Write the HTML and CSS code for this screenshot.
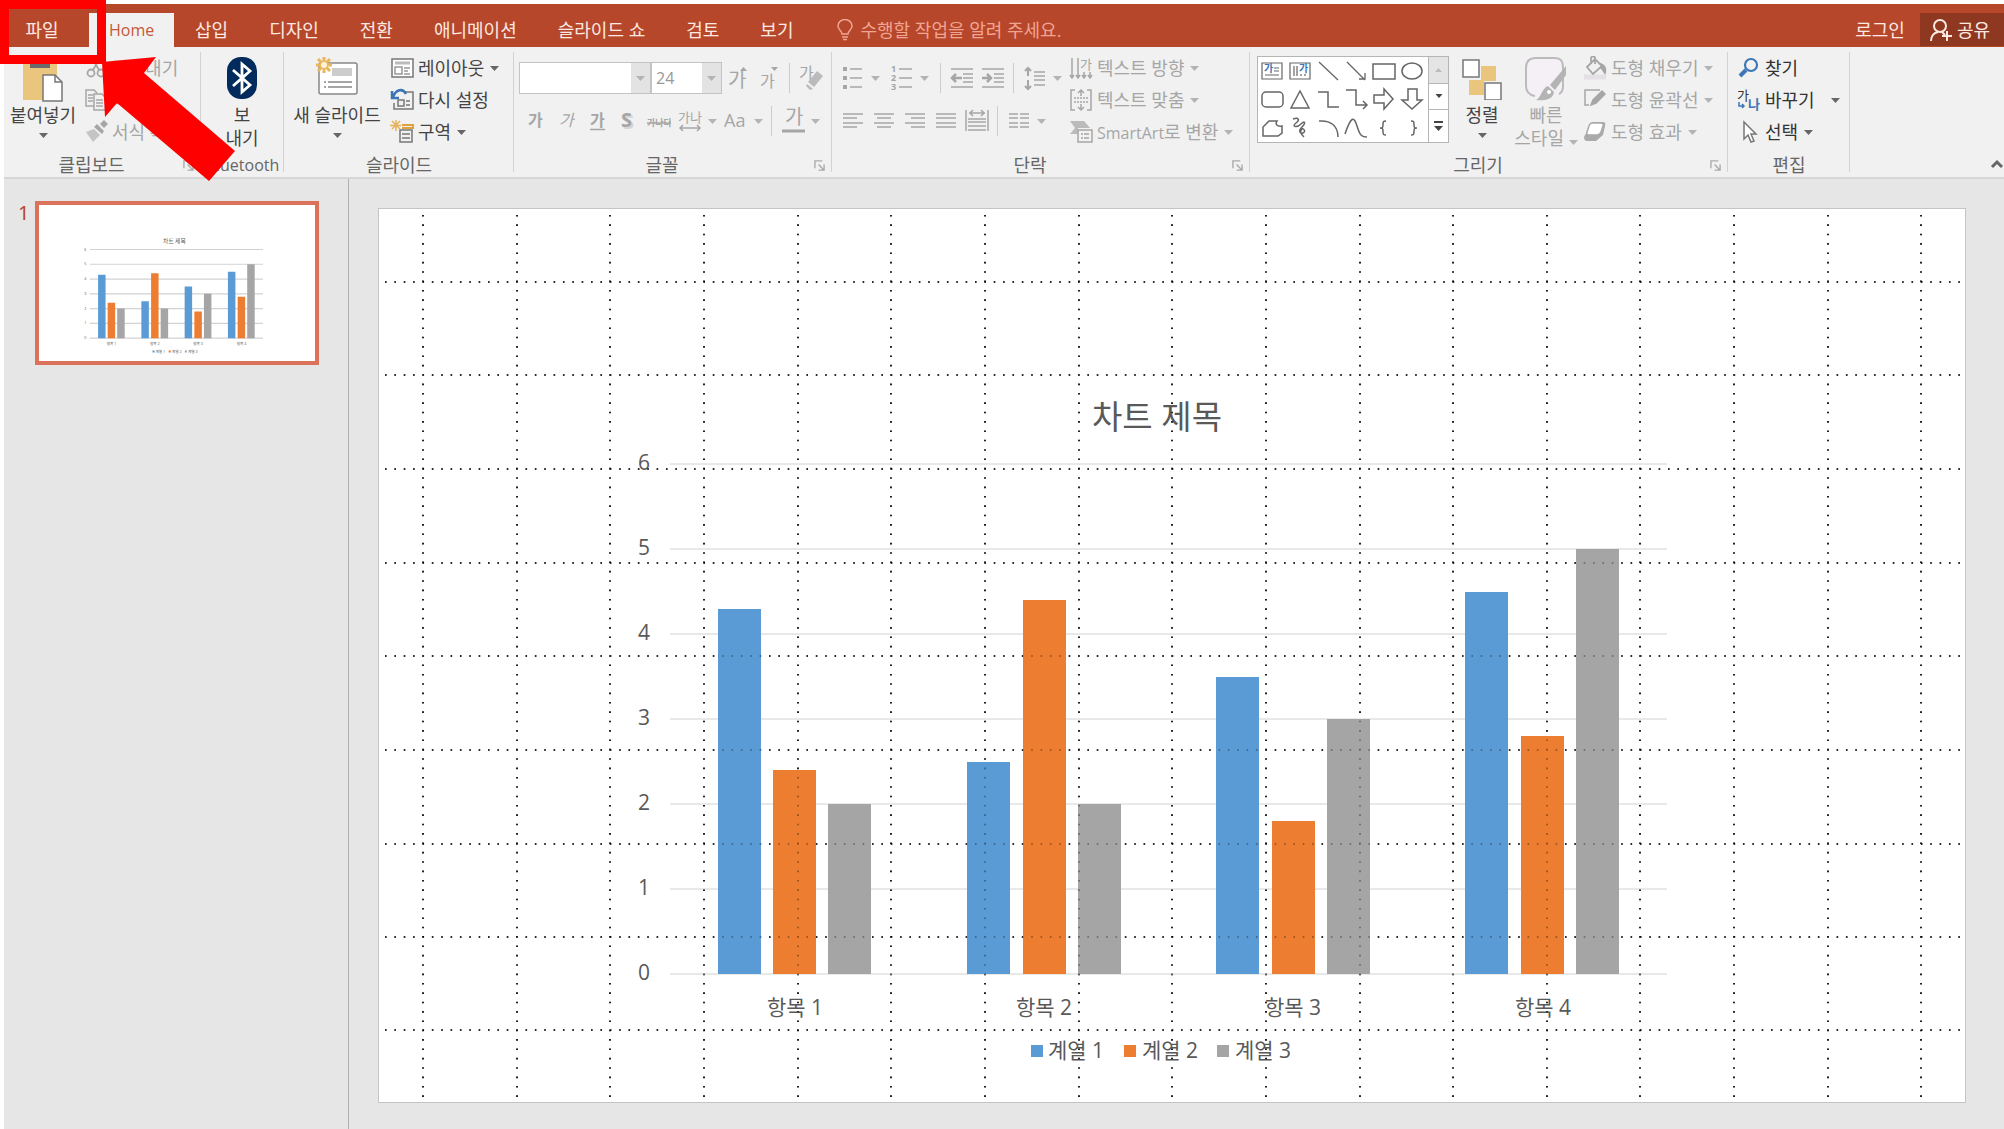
FILE: index.html
```html
<!DOCTYPE html>
<html lang="ko">
<head>
<meta charset="utf-8">
<title>프레젠테이션</title>
<link rel="stylesheet" href="styles.css">
</head>
<body>
<svg class="defs" width="0" height="0" aria-hidden="true">
  <symbol id="arrow" viewBox="0 0 9 5"><path d="M0 0h9L4.500 5z" fill="currentColor"/></symbol>
  <symbol id="launcher" viewBox="0 0 12 12"><path d="M1 9V1h8M5 5l5 5M11 5v6H5" fill="none" stroke="currentColor" stroke-width="1.500"/></symbol>
  <symbol id="dots" viewBox="0 0 1588 895">
    <path fill="none" stroke="#000" stroke-width="1.600" stroke-dasharray="1.600 7.765" d="M45 7V890M139 7V890M232 7V890M326 7V890M420 7V890M513 7V890M607 7V890M701 7V890M794 7V890M888 7V890M982 7V890M1075 7V890M1169 7V890M1262 7V890M1356 7V890M1450 7V890M1543 7V890M7 74H1583M7 167H1583M7 261H1583M7 355H1583M7 448H1583M7 542H1583M7 636H1583M7 729H1583M7 822H1583"/>
  </symbol>
</svg>

<div class="app">
  <header class="tabs">
    <nav class="tab-list" aria-label="리본 탭">
      <button class="tab file">파일</button>
      <button class="tab active latin">Home</button>
      <button class="tab">삽입</button>
      <button class="tab">디자인</button>
      <button class="tab">전환</button>
      <button class="tab">애니메이션</button>
      <button class="tab">슬라이드 쇼</button>
      <button class="tab">검토</button>
      <button class="tab">보기</button>
    </nav>
    <button class="tell">
      <svg width="16" height="22" viewBox="0 0 16 22" fill="none" stroke="currentColor" stroke-width="1.500"><path d="M5 15c0-3-4-4-4-8a7 6.500 0 0 1 14 0c0 4-4 5-4 8zM5 18h6M6 20.500h4"/></svg>
      수행할 작업을 알려 주세요.
    </button>
    <div class="account">
      <button class="login">로그인</button>
      <button class="share">
        <svg width="22" height="24" viewBox="0 0 22 24" fill="none" stroke="currentColor" stroke-width="2"><circle cx="10" cy="8" r="6"/><path d="M1 23c0-5 3-8 7-9M12 14l3 3M17 13v10M12 18h10"/></svg>
        공유
      </button>
    </div>
  </header>

  <div class="ribbon">
    <section class="group clipboard">
      <div class="content">
        <button class="big paste">
          <svg width="40" height="46" viewBox="0 0 40 46"><path fill="#eac57d" d="M0 4h34v40H0z"/><path fill="#6a6a6a" d="M7 4h20v8H7zM12 0h10v6H12z"/><path fill="#fff" stroke="#777" stroke-width="1.500" d="M20 19h12l7 7v19H20z"/><path fill="none" stroke="#777" stroke-width="1.500" d="M32 19v7h7"/></svg>
          <span>붙여넣기</span>
          <svg class="arrow"><use href="#arrow"/></svg>
        </button>
        <div class="stack dim">
          <button class="item"><svg width="24" height="24" viewBox="0 0 24 24" fill="none" stroke="currentColor" stroke-width="1.800"><circle cx="7" cy="17" r="3.500"/><circle cx="17" cy="17" r="3.500"/><path d="M9 14l7-12M15 14L8 2"/></svg>잘라내기</button>
          <button class="item"><svg width="24" height="24" viewBox="0 0 24 24" fill="none" stroke="currentColor" stroke-width="1.500"><path d="M10 18H2V2h8l3 3M4 7h5M4 10h5M4 13h5M10 6h8l4 4v12H10zM12 12h7M12 15h7M12 18h7"/></svg>복사</button>
          <button class="item"><svg width="24" height="24" viewBox="0 0 24 24" fill="currentColor"><path d="M2 12l8-3 6 6-7 7z" opacity=".6"/><path d="M10 7l8 7 2-3-7-7zM16 4l4-4 4 4-4 4z"/></svg>서식 복사</button>
        </div>
      </div>
      <footer><span>클립보드</span><button class="launch" aria-label="클립보드 옵션"><svg><use href="#launcher"/></svg></button></footer>
    </section>

    <section class="group bluetooth">
      <div class="content">
        <button class="big">
          <svg width="32" height="44" viewBox="0 0 32 44"><rect x="1" y="1" width="30" height="42" rx="14" fill="#002b5c"/><path fill="none" stroke="#fff" stroke-width="2.800" d="M7 14l17 15-8 7V8l8 7L7 30"/></svg>
          <span>보<br>내기</span>
        </button>
      </div>
      <footer><span class="latin">Bluetooth</span></footer>
    </section>

    <section class="group slides">
      <div class="content">
        <button class="big new-slide">
          <svg width="44" height="42" viewBox="0 0 44 42"><rect x="4" y="7" width="38" height="31" rx="2" fill="#fff" stroke="#888" stroke-width="1.500"/><path fill="#ccc" d="M17 12h20v8H17z"/><path stroke="#888" stroke-width="1.500" stroke-dasharray="2 2 24 2" d="M9 26h28M9 31h28"/><path stroke="#eab65b" stroke-width="3" d="M9 1v16M1 9h16M3 3l12 12M15 3L3 15"/><circle cx="9" cy="9" r="3" fill="#fff3d8"/></svg>
          <span>새 슬라이드</span>
          <svg class="arrow"><use href="#arrow"/></svg>
        </button>
        <div class="stack">
          <button class="item"><svg width="24" height="24" viewBox="0 0 24 24" fill="none" stroke="#777" stroke-width="1.500"><path fill="#fff" d="M2 3h21v18H2z"/><path stroke="#bbb" stroke-width="3" d="M5 7h15"/><path d="M5 11h7v7H5zM14 12h6M14 15h4M14 18h6" stroke="#999"/></svg>레이아웃<svg class="arrow"><use href="#arrow"/></svg></button>
          <button class="item"><svg width="24" height="24" viewBox="0 0 24 24" fill="none" stroke="#777" stroke-width="1.500"><path d="M14 4h9v17H4v-6M8 12h6v6H8zM16 13h4M16 17h4"/><path stroke="#3d76b5" stroke-width="2.500" d="M2 3v7h7M3 9c3-8 10-9 13-3"/></svg>다시 설정</button>
          <button class="item"><svg width="24" height="24" viewBox="0 0 24 24" fill="none" stroke="#777" stroke-width="1.500"><path d="M10 10h12v12H10zM12 14h8M12 18h8"/><path stroke="#e2a13f" stroke-width="2" d="M12 5h11v3H12"/><path stroke="#e8b25a" d="M6 0v11M0 5.500h11M2 1l8 8M10 1L2 9"/></svg>구역<svg class="arrow"><use href="#arrow"/></svg></button>
        </div>
      </div>
      <footer><span>슬라이드</span></footer>
    </section>

    <section class="group font">
      <div class="content dim">
        <div class="tools">
          <div class="row">
            <span class="combo family"><select aria-label="글꼴"><option></option></select><svg class="arrow"><use href="#arrow"/></svg></span>
            <span class="combo size"><select aria-label="글꼴 크기"><option>24</option></select><svg class="arrow"><use href="#arrow"/></svg></span>
            <button class="tool" aria-label="글꼴 크게"><svg width="24" height="28" viewBox="0 0 24 28"><text class="glyph big-glyph" x="2" y="23">가</text><path fill="currentColor" d="M14 7h7l-3.500-4z"/></svg></button>
            <button class="tool" aria-label="글꼴 작게"><svg width="24" height="28" viewBox="0 0 24 28"><text class="glyph" x="3" y="23">가</text><path fill="currentColor" d="M14 3h7l-3.500 4z"/></svg></button>
            <i class="sep"></i>
            <button class="tool" aria-label="서식 지우기"><svg width="24" height="28" viewBox="0 0 24 28"><text class="glyph" x="0" y="15">가</text><path fill="#bbb" d="M9 18l9-11 6 5-9 11zM8 20l6 5-3 1-4-4z"/></svg></button>
          </div>
          <div class="row">
            <button class="tool" aria-label="굵게"><svg width="24" height="28" viewBox="0 0 24 28"><text class="glyph bold" x="5" y="19">가</text></svg></button>
            <button class="tool" aria-label="기울임꼴"><svg width="24" height="28" viewBox="0 0 24 28"><text class="glyph italic" x="5" y="19">가</text></svg></button>
            <button class="tool" aria-label="밑줄"><svg width="24" height="28" viewBox="0 0 24 28"><text class="glyph bold" x="5" y="19">가</text><path stroke="currentColor" stroke-width="1.500" d="M5 22.500h15"/></svg></button>
            <button class="tool" aria-label="그림자"><svg width="24" height="28" viewBox="0 0 24 28"><text class="shadow-s" x="7" y="22" opacity=".35">S</text><text class="shadow-s" x="5" y="20">S</text></svg></button>
            <button class="tool" aria-label="취소선"><svg width="24" height="28" viewBox="0 0 24 28"><text class="strike" x="0" y="19">가나다</text><path stroke="currentColor" stroke-width="1.500" d="M0 16h24"/></svg></button>
            <button class="tool drop" aria-label="문자 간격"><svg width="24" height="28" viewBox="0 0 24 28"><text class="pair" x="0" y="15">가나</text><path fill="none" stroke="currentColor" stroke-width="1.500" d="M2 21h20M5 18l-3 3 3 3M19 18l3 3-3 3"/></svg><svg class="arrow"><use href="#arrow"/></svg></button>
            <button class="tool drop" aria-label="대/소문자 바꾸기"><svg width="24" height="28" viewBox="0 0 24 28"><text class="aa" x="0" y="20">Aa</text></svg><svg class="arrow"><use href="#arrow"/></svg></button>
            <i class="sep"></i>
            <button class="tool drop" aria-label="글꼴 색"><svg width="24" height="28" viewBox="0 0 24 28"><text class="glyph big-glyph" x="4" y="17">가</text><path stroke="currentColor" stroke-width="3" d="M1 24h23"/></svg><svg class="arrow"><use href="#arrow"/></svg></button>
          </div>
        </div>
      </div>
      <footer><span>글꼴</span><button class="launch" aria-label="글꼴 옵션"><svg><use href="#launcher"/></svg></button></footer>
    </section>

    <section class="group paragraph">
      <div class="content dim">
        <div class="tools">
          <div class="row">
            <button class="tool drop list" aria-label="글머리 기호"><svg width="24" height="28" viewBox="0 0 24 28" stroke="currentColor" stroke-width="1.500"><path d="M9 5h12M9 14h12M9 23h12"/><path stroke-width="4" d="M2 5h4M2 14h4M2 23h4"/></svg><svg class="arrow"><use href="#arrow"/></svg></button>
            <button class="tool drop list" aria-label="번호 매기기"><svg width="24" height="28" viewBox="0 0 24 28"><path stroke="currentColor" stroke-width="1.500" d="M9 5h13M9 14h13M9 23h13"/><text class="tiny" x="1" y="8">1</text><text class="tiny" x="1" y="17">2</text><text class="tiny" x="1" y="26">3</text></svg><svg class="arrow"><use href="#arrow"/></svg></button>
            <i class="sep"></i>
            <button class="tool" aria-label="내어쓰기"><svg width="24" height="28" viewBox="0 0 24 28" fill="none" stroke="currentColor" stroke-width="1.500"><path d="M1 5h22M13 10h10M13 14h10M13 18h10M1 23h22"/><path stroke-width="2.500" d="M2 14h10M6 10l-4 4 4 4"/></svg></button>
            <button class="tool" aria-label="들여쓰기"><svg width="24" height="28" viewBox="0 0 24 28" fill="none" stroke="currentColor" stroke-width="1.500"><path d="M1 5h22M13 10h10M13 14h10M13 18h10M1 23h22"/><path stroke-width="2.500" d="M1 14h9M6 10l4 4-4 4"/></svg></button>
            <i class="sep"></i>
            <button class="tool drop" aria-label="줄 간격"><svg width="24" height="28" viewBox="0 0 24 28" fill="none" stroke="currentColor" stroke-width="1.500"><path d="M11 8h11M11 12h11M11 16h11M11 21h11"/><path stroke-width="2" d="M5 4v8M2 7l3-3 3 3M5 16v9M2 22l3 3 3-3"/></svg><svg class="arrow"><use href="#arrow"/></svg></button>
          </div>
          <div class="row">
            <button class="tool" aria-label="왼쪽 맞춤"><svg width="24" height="28" viewBox="0 0 24 28" stroke="currentColor" stroke-width="1.500"><path d="M2 7h20M2 11h14M2 16h20M2 20h14"/></svg></button>
            <button class="tool" aria-label="가운데 맞춤"><svg width="24" height="28" viewBox="0 0 24 28" stroke="currentColor" stroke-width="1.500"><path d="M2 7h20M5 11h14M2 16h20M5 20h14"/></svg></button>
            <button class="tool" aria-label="오른쪽 맞춤"><svg width="24" height="28" viewBox="0 0 24 28" stroke="currentColor" stroke-width="1.500"><path d="M2 7h20M8 11h14M2 16h20M8 20h14"/></svg></button>
            <button class="tool" aria-label="양쪽 맞춤"><svg width="24" height="28" viewBox="0 0 24 28" stroke="currentColor" stroke-width="1.500"><path d="M2 7h20M2 11h20M2 16h20M2 20h20"/></svg></button>
            <button class="tool" aria-label="균등 분할"><svg width="24" height="28" viewBox="0 0 24 28" fill="none" stroke="currentColor" stroke-width="1.500"><path d="M1 3v21M23 3v21M3 12h18M3 15h18M3 19h18M3 23h18M4 6h16M8 3L5 6l3 3M16 3l3 3-3 3"/></svg></button>
            <i class="sep"></i>
            <button class="tool drop" aria-label="단"><svg width="24" height="28" viewBox="0 0 24 28" stroke="currentColor" stroke-width="1.500"><path d="M2 7h9M13 7h9M2 11h9M13 11h9M2 16h9M13 16h9M2 20h9M13 20h9"/></svg><svg class="arrow"><use href="#arrow"/></svg></button>
          </div>
        </div>
        <div class="stack">
          <button class="item"><svg width="24" height="24" viewBox="0 0 24 24" fill="none" stroke="currentColor" stroke-width="1.500"><path d="M3 2v19M9 2v19M15 16v5M21 16v5M1 19l2 3 2-3M7 19l2 3 2-3M13 19l2 3 2-3M19 19l2 3 2-3"/><text class="glyph mini" x="11" y="13">가</text></svg>텍스트 방향<svg class="arrow"><use href="#arrow"/></svg></button>
          <button class="item"><svg width="24" height="24" viewBox="0 0 24 24" fill="none" stroke="currentColor" stroke-width="1.500"><path d="M6 2H2v20h4M18 2h4v20h-4M12 2v6M9 5l3-3 3 3M12 16v6M9 19l3 3 3-3"/><path stroke-dasharray="2 1" d="M5 10h14M5 14h14"/></svg>텍스트 맞춤<svg class="arrow"><use href="#arrow"/></svg></button>
          <button class="item"><svg width="24" height="24" viewBox="0 0 24 24"><path fill="#bbb" d="M1 1h14l6 7H9v6H1l5-6z"/><path fill="#f1f1f1" stroke="currentColor" stroke-width="1.500" d="M9 10h14v12H9z"/><path stroke="currentColor" stroke-width="1.500" stroke-dasharray="2 1 5 9" d="M12 14h9M12 18h9"/></svg><span><span class="latin">SmartArt</span>로 변환</span><svg class="arrow"><use href="#arrow"/></svg></button>
        </div>
      </div>
      <footer><span>단락</span><button class="launch" aria-label="단락 옵션"><svg><use href="#launcher"/></svg></button></footer>
    </section>

    <section class="group drawing">
      <div class="content">
        <div class="gallery">
          <div class="shapes">
            <button aria-label="텍스트 상자"><svg viewBox="0 0 28 28"><path d="M4 6h20v16H4zM16 11h5M16 14h5M7 18h14" stroke-width="1.200"/><text class="blue-glyph" x="6" y="15">가</text></svg></button>
            <button aria-label="세로 텍스트 상자"><svg viewBox="0 0 28 28"><path d="M4 6h20v16H4zM8 9v10M11 9v10M15 17v2M19 17v2" stroke-width="1.200"/><text class="blue-glyph" x="13" y="15">가</text></svg></button>
            <button aria-label="선"><svg viewBox="0 0 28 28"><path d="M5 5l19 18" stroke-width="1.300"/></svg></button>
            <button aria-label="화살표"><svg viewBox="0 0 28 28"><path d="M5 5l18 18M17 22h6v-6" stroke-width="1.300"/></svg></button>
            <button aria-label="직사각형"><svg viewBox="0 0 28 28"><path d="M3 7h22v15H3z"/></svg></button>
            <button aria-label="타원"><svg viewBox="0 0 28 28"><ellipse cx="14" cy="14" rx="10" ry="8"/></svg></button>
            <button aria-label="둥근 사각형"><svg viewBox="0 0 28 28"><rect x="4" y="7" width="21" height="15" rx="4"/></svg></button>
            <button aria-label="삼각형"><svg viewBox="0 0 28 28"><path d="M14 6l9 17H5z"/></svg></button>
            <button aria-label="꺾인 연결선"><svg viewBox="0 0 28 28"><path d="M4 7h10v15h11"/></svg></button>
            <button aria-label="꺾인 화살표"><svg viewBox="0 0 28 28"><path d="M4 5h10v15h11M21 16l4 4-4 4"/></svg></button>
            <button aria-label="오른쪽 화살표"><svg viewBox="0 0 28 28"><path d="M4 10h10V4l9 10-9 10v-6H4z"/></svg></button>
            <button aria-label="아래쪽 화살표"><svg viewBox="0 0 28 28"><path d="M10 4v11H4l10 9 10-9h-5V4z"/></svg></button>
            <button aria-label="자유형"><svg viewBox="0 0 28 28"><path d="M5 22V13l6-6h8c-2 3 0 6 5 5v7l-4 3z"/></svg></button>
            <button aria-label="자유 곡선"><svg viewBox="0 0 28 28"><path d="M7 5c6-2 7 1 3 4-5 4 1 5 5 1s5-1 1 3-2 7 1 6 1-5-1-4-2 5 2 8"/></svg></button>
            <button aria-label="호"><svg viewBox="0 0 28 28"><path d="M5 7c12-1 19 5 19 16"/></svg></button>
            <button aria-label="곡선"><svg viewBox="0 0 28 28"><path d="M3 20C9 2 12 2 15 12s5 11 10 11"/></svg></button>
            <button aria-label="왼쪽 중괄호"><svg viewBox="0 0 28 28"><path d="M16 7c-3 0-3 1-3 4s-1 3-3 3c2 0 3 0 3 3s0 4 3 4"/></svg></button>
            <button aria-label="오른쪽 중괄호"><svg viewBox="0 0 28 28"><path d="M13 7c3 0 3 1 3 4s1 3 3 3c-2 0-3 0-3 3s0 4-3 4"/></svg></button>
          </div>
          <div class="scroller">
            <button class="off" aria-label="위로"><svg width="7" height="4" viewBox="0 0 7 4"><path d="M0 4h7L3.500 0z" fill="#bbb"/></svg></button>
            <button aria-label="아래로"><svg width="8" height="4" viewBox="0 0 9 5"><use href="#arrow" width="9" height="5"/></svg></button>
            <button aria-label="자세히"><svg width="9" height="10" viewBox="0 0 9 10"><path d="M0 0h9v2H0zM0 5h9L4.500 10z" fill="currentColor"/></svg></button>
          </div>
        </div>
        <button class="big arrange">
          <svg width="40" height="42" viewBox="0 0 40 42"><path fill="#eac57d" d="M19 8h15v15H19zM7 22h15v15H7z"/><path fill="#fff" stroke="#777" stroke-width="1.500" d="M1 2h16v17H1zM23 25h16v17H23z"/></svg>
          <span>정렬</span>
          <svg class="arrow"><use href="#arrow"/></svg>
        </button>
        <button class="big quick dim">
          <svg width="42" height="46" viewBox="0 0 42 46"><path fill="#f5f0f6" stroke="#bbb" stroke-width="2" d="M10 40C4 39 1 36 1 30V12C1 5 4 2 11 2h18c7 0 9 3 9 10v18c0 4-2 7-4 8"/><path fill="#b4b4b4" d="M41 10v9L30 34l-5-5zM23 30l6 6c-1 7-8 9-18 8 5-2 6-12 12-14z"/><circle cx="24" cy="36" r="2" fill="#fff"/></svg>
          <span>빠른<br>스타일 <svg class="arrow"><use href="#arrow"/></svg></span>
        </button>
        <div class="stack dim">
          <button class="item"><svg width="24" height="24" viewBox="0 0 24 24" fill="none" stroke="currentColor" stroke-width="1.800"><path stroke="#e5dfe6" stroke-width="5" d="M1 21h22"/><path d="M4 11l8-8 7 7-9 8zM8 8V2c0-2 4-2 4 0v6"/><path fill="currentColor" d="M18 8c4 1 5 5 4 9-2-2-2-4-4-5z"/></svg>도형 채우기<svg class="arrow"><use href="#arrow"/></svg></button>
          <button class="item"><svg width="24" height="24" viewBox="0 0 24 24" fill="none" stroke="currentColor" stroke-width="1.500"><path d="M17 2H2v15h4"/><path fill="currentColor" d="M8 17l2-5 9-9 3 3-9 9z"/></svg>도형 윤곽선<svg class="arrow"><use href="#arrow"/></svg></button>
          <button class="item"><svg width="24" height="24" viewBox="0 0 24 24"><path fill="#aaa" d="M9 2h11q3 0 2 4l-2 9-7 6H4q-3 0-3-4z"/><path fill="#fff" stroke="#aaa" stroke-width="1.500" d="M9 3h9q3 0 2 3l-2 6q-1 3-4 3H6q-3 0-2-3l2-6q1-3 3-3z"/></svg>도형 효과<svg class="arrow"><use href="#arrow"/></svg></button>
        </div>
      </div>
      <footer><span>그리기</span><button class="launch" aria-label="그리기 옵션"><svg><use href="#launcher"/></svg></button></footer>
    </section>

    <section class="group editing">
      <div class="content">
        <div class="stack">
          <button class="item"><svg width="24" height="24" viewBox="0 0 24 24" fill="none" stroke="#3d76b5"><circle cx="14" cy="9" r="6" stroke-width="2.200"/><path stroke-width="4" d="M9 14l-6 6"/></svg>찾기</button>
          <button class="item replace"><svg width="24" height="24" viewBox="0 0 24 24"><text class="glyph mini" x="0" y="12">가</text><text class="blue-glyph mini" x="11" y="21">나</text><path fill="none" stroke="#3d76b5" stroke-width="1.500" d="M2 14v4h5M5 16l2 2-2 2"/></svg>바꾸기<svg class="arrow"><use href="#arrow"/></svg></button>
          <button class="item"><svg width="24" height="24" viewBox="0 0 24 24"><path fill="#fff" stroke="#777" stroke-width="1.500" d="M7 2v17l4-4 3 7 3-1-3-7h5z"/></svg>선택<svg class="arrow"><use href="#arrow"/></svg></button>
        </div>
      </div>
      <footer><span>편집</span></footer>
    </section>

    <button class="collapse" aria-label="리본 축소"><svg width="14" height="10" viewBox="0 0 14 10"><path fill="none" stroke="#666" stroke-width="3" d="M2 8l5-5 5 5"/></svg></button>
  </div>

  <div class="workspace">
    <aside class="thumbs">
      <span class="number">1</span>
      <button class="thumb" aria-label="슬라이드 1"><svg viewBox="0 0 1588 895"><use href="#chart"/></svg></button>
    </aside>
    <main class="stage">
      <svg class="slide" viewBox="0 0 1588 895" role="img" aria-label="차트 제목">
        <use href="#dots"/>
        <g id="chart">
          <path class="rules" d="M292 256H1289M292 341H1289M292 426H1289M292 511H1289M292 596H1289M292 681H1289M292 766H1289"/>
          <path fill="#5b9bd5" d="M340 401h43v365h-43zM589 554h43v212h-43zM838 469h43v297h-43zM1087 384h43v382h-43zM653 837h12v12h-12z"/>
          <path fill="#ed7d31" d="M395 562h43v204h-43zM645 392h43v374h-43zM894 613h43v153h-43zM1143 528h43v238h-43zM746 837h12v12h-12z"/>
          <path fill="#a5a5a5" d="M450 596h43v170h-43zM700 596h43v170h-43zM949 511h43v255h-43zM1198 341h43v425h-43zM839 837h12v12h-12z"/>
          <g class="chart-text">
            <text class="chart-title" x="779" y="221">차트 제목</text>
            <text x="266" y="262">6</text><text x="266" y="347">5</text><text x="266" y="432">4</text><text x="266" y="517">3</text><text x="266" y="602">2</text><text x="266" y="687">1</text><text x="266" y="772">0</text>
            <text x="417" y="807">항목 1</text><text x="666" y="807">항목 2</text><text x="915" y="807">항목 3</text><text x="1165" y="807">항목 4</text>
            <text x="698" y="850">계열 1</text><text x="792" y="850">계열 2</text><text x="885" y="850">계열 3</text>
          </g>
        </g>
        <use href="#dots" opacity=".4"/>
      </svg>
    </main>
  </div>
</div>

<svg class="callout" width="240" height="185" viewBox="0 0 240 185" aria-hidden="true">
  <path fill="none" stroke="#f00" stroke-width="9" d="M4.500 4.500H101.500V59.500H4.500z"/>
  <path fill="#f00" d="M102 62l54-5-12 16 91 78-26 30-92-78-12 14z"/>
</svg>
</body>
</html>
```
FILE: styles.css
```css
* { box-sizing: border-box; }

body {
  margin: 0;
  background: #fff;
  color: #444;
  font: 18px/22px "Open Sans", "Noto Sans CJK KR", sans-serif;
}

button {
  margin: 0;
  padding: 0;
  border: 0;
  background: none;
  color: inherit;
  font: inherit;
  white-space: nowrap;
}

svg { display: block; flex: none; }
.defs { position: absolute; }
.latin { font-size: 16px; }
.dim { color: #a6a6a6; }

.app {
  display: flex;
  flex-direction: column;
  min-height: 100vh;
  padding: 4px 0 0 4px;
}

/* Tab bar */
.tabs {
  display: flex;
  height: 43px;
  padding-top: 9px;
  background: #b7472a;
  color: #fbe9e2;
}
.tab-list { display: flex; gap: 1px; }
.tab { padding: 0 20px; }
.tab.file { width: 84px; padding: 0 26px 0 18px; }
.tab.active { width: 85px; background: #f1f1f1; color: #c5583a; }
.tell {
  display: flex;
  align-items: center;
  gap: 7px;
  margin-left: 24px;
  color: #f0a592;
}
.account { display: flex; gap: 15px; margin-left: auto; }
.share {
  display: flex;
  align-items: center;
  gap: 5px;
  margin-bottom: 1px;
  padding: 0 14px 0 10px;
  background: #8f3821;
}

/* Ribbon */
.ribbon {
  display: flex;
  height: 132px;
  padding-top: 5px;
  background: #f1f1f1;
  border-bottom: 2px solid #d6d6d6;
}
.group {
  display: flex;
  flex-direction: column;
  flex: none;
  background: linear-gradient(#d2d2d2, #d2d2d2) right top / 1px 120px no-repeat;
}
.content { display: flex; height: 101px; }
.group footer {
  display: flex;
  align-items: center;
  height: 24px;
  color: #666;
}
.group footer span { flex: 1; text-align: center; }
.launch { width: 22px; color: #aaa; }
.launch svg { width: 11px; height: 11px; margin-left: 4px; }
.clipboard { width: 197px; }
.bluetooth { width: 83px; }
.slides { width: 230px; }
.font { width: 318px; }
.paragraph { width: 418px; }
.drawing { width: 478px; }
.editing { width: 122px; }

.arrow { width: 9px; height: 5px; color: #666; }
.dim .arrow { color: #b4b4b4; }

.big {
  display: flex;
  flex-direction: column;
  align-items: center;
  padding-top: 4px;
}
.big > svg:first-child { margin-bottom: auto; }
.big > span { line-height: 23px; }
.big > span:last-child { margin-bottom: 3px; }
.big > .arrow { margin: 6px 0 15px; }
.paste { width: 78px; }
.bluetooth .big { width: 82px; }
.new-slide { width: 106px; }
.arrange { width: 42px; margin-left: 12px; }
.quick { width: 66px; margin-left: 10px; }
.quick .arrow { display: inline-block; }
.arrange > svg:first-child { margin-top: 2px; }

.stack { display: flex; flex-direction: column; align-items: flex-start; }
.item {
  display: flex;
  align-items: center;
  gap: 4px;
  height: 32px;
}
.item .arrow { margin-left: 2px; }
.clipboard .stack { margin-left: 2px; }
.paragraph .stack { margin-left: 1px; }
.drawing .stack { margin-left: 4px; }
.editing .stack { margin-left: 9px; color: #333; }
.item.replace .arrow { margin-left: 12px; }

.tools { padding: 10px 0 0 5px; }
.paragraph .tools { width: 236px; }
.row { display: flex; align-items: center; height: 32px; margin-bottom: 11px; }
.tool { display: flex; justify-content: center; width: 31px; }
.tool.drop {
  align-items: center;
  justify-content: flex-start;
  gap: 6px;
  width: 46px;
  padding-left: 4px;
}
.tool.list { width: 49px; }
.sep { width: 1px; height: 30px; margin: 0 5px; background: #ccc; }

.combo {
  display: grid;
  grid-template-columns: 1fr 20px;
  align-items: center;
  height: 32px;
  border: 1px solid #c3c3c3;
  background: linear-gradient(to left, #e3e3e3 19px, #fff 19px);
}
.combo select {
  grid-area: 1 / 1 / 2 / 3;
  width: 100%;
  height: 30px;
  padding: 0 4px;
  border: 0;
  background: none;
  color: #999;
  font: 16px/22px "Open Sans", "Noto Sans CJK KR", sans-serif;
  appearance: none;
}
.combo .arrow { grid-area: 1 / 2; justify-self: center; pointer-events: none; }
.family { width: 132px; }
.size { width: 71px; }

/* Lettering inside tool icons */
svg text { fill: currentColor; stroke: none; font-family: "Open Sans", "Noto Sans CJK KR", sans-serif; }
svg .glyph { font-size: 16px; }
svg .big-glyph { font-size: 20px; }
svg .bold { font-weight: 700; }
svg .italic { font-style: italic; }
svg .shadow-s { font-size: 20px; font-weight: 700; }
svg .strike { font-size: 9px; font-weight: 700; }
svg .pair { font-size: 13px; }
svg .aa { font-size: 18px; }
svg .tiny { font-size: 9px; font-weight: 700; }
svg .blue-glyph { fill: #3d76b5; font-size: 10px; font-weight: 700; }
svg .mini { font-size: 13px; }

/* Shape gallery */
.gallery {
  display: flex;
  height: 87px;
  margin: 4px 0 0 7px;
  border: 1px solid #b5b5b5;
  background: #fff;
}
.shapes { display: grid; grid-template-columns: repeat(6, 28px); padding-right: 2px; }
.shapes svg { width: 28px; height: 28px; fill: none; stroke: #666; stroke-width: 1.500; }
.scroller { display: grid; width: 20px; border-left: 1px solid #b5b5b5; }
.scroller button { display: grid; place-items: center; }
.scroller button + button { border-top: 1px solid #b5b5b5; }
.scroller .off { background: #e4e4e4; }

.collapse { align-self: flex-end; margin: 0 0 8px auto; }

/* Workspace */
.workspace { display: flex; flex: 1; background: #e6e6e6; }
.thumbs {
  display: flex;
  gap: 5px;
  flex: none;
  align-items: flex-start;
  width: 345px;
  padding: 22px 29px 0 14px;
  border-right: 1px solid #b0b0b0;
}
.number { width: 12px; color: #b7472a; font: 20px/24px "Noto Sans", sans-serif; }
.thumb { --rule: 7; flex: 1; border: 4px solid #dc7259; background: #fff; }
.thumb svg { width: 100%; }
.stage { flex: 1; padding: 29px 38px 26px 29px; }
.slide { width: 100%; background: #fff; outline: 1px solid #c4c4c4; outline-offset: -1px; }

/* Chart */
.rules { fill: none; stroke: #d2d2d2; stroke-width: var(--rule, 1); }
.chart-text { text-anchor: middle; font-size: 21px; color: #595959; }
svg .chart-title { font-size: 33px; }

/* Red marker drawn over the File tab */
.callout { position: absolute; top: 0; left: 0; pointer-events: none; }
```
